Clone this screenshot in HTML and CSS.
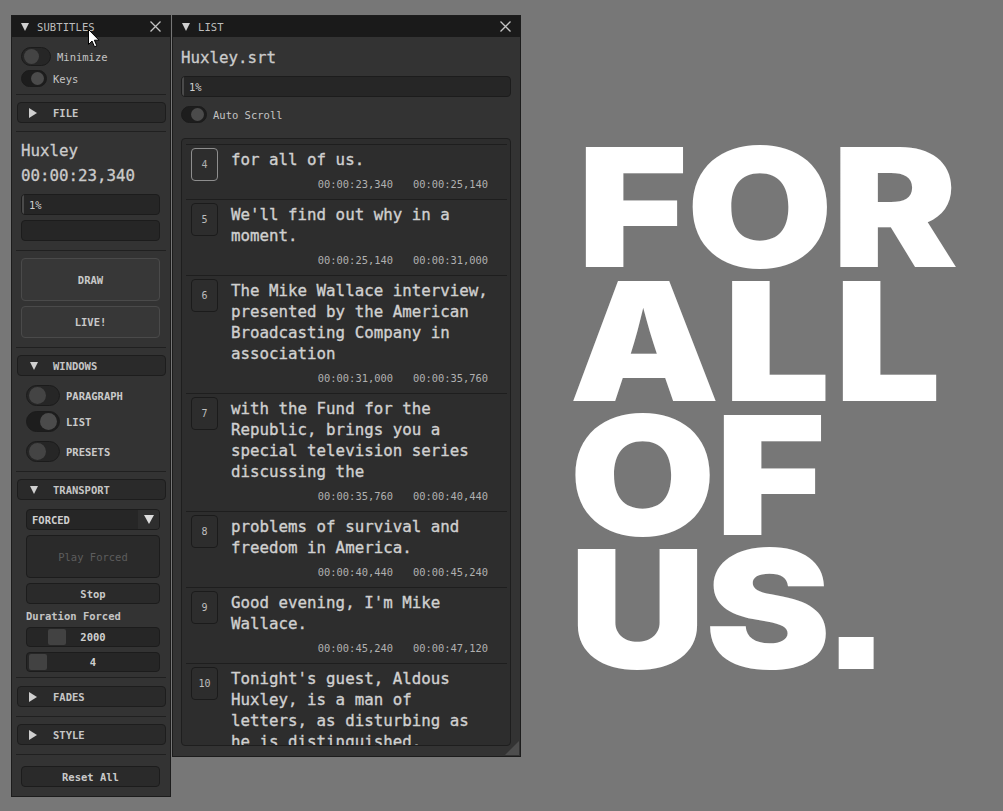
FILE: index.html
```html
<!DOCTYPE html>
<html>
<head>
<meta charset="utf-8">
<link rel="stylesheet" href="styles.css">
</head>
<body>
<div class="desk">

  <section class="win win-sub">
    <header class="titlebar">
      <i class="tri-down"></i><span class="ttl">SUBTITLES</span>
      <svg class="close" viewBox="0 0 11 11"><path d="M0.5 0.5 L10.5 10.5 M10.5 0.5 L0.5 10.5"/></svg>
    </header>
    <div class="sub-body">
      <div class="row-tog in1"><span class="tog tog-md"><i></i></span><span class="lbl">Minimize</span></div>
      <div class="row-tog in1 gap-4"><span class="tog tog-sm on"><i></i></span><span class="lbl lbl-keys">Keys</span></div>
      <div class="sep gap-7"></div>
      <div class="hdr gap-7"><i class="tri-right"></i><span>FILE</span></div>
      <div class="sep gap-8"></div>
      <div class="big gap-9">Huxley</div>
      <div class="big">00:00:23,340</div>
      <div class="bar in1 gap-8"><i class="fill"></i><span>1%</span></div>
      <div class="bar in1"></div>
      <div class="sep gap-9"></div>
      <div class="btn btn-lit in1 h43 gap-7">DRAW</div>
      <div class="btn btn-lit in1 h32">LIVE!</div>
      <div class="sep gap-9"></div>
      <div class="hdr gap-7"><i class="tri-down tri-hdr"></i><span>WINDOWS</span></div>
      <div class="row-tog in2 gap-9"><span class="tog tog-lg"><i></i></span><span class="lbl strong">PARAGRAPH</span></div>
      <div class="row-tog in2"><span class="tog tog-lg on"><i></i></span><span class="lbl strong">LIST</span></div>
      <div class="row-tog in2 gap-9"><span class="tog tog-lg"><i></i></span><span class="lbl strong">PRESETS</span></div>
      <div class="sep gap-9"></div>
      <div class="hdr gap-7"><i class="tri-down tri-hdr"></i><span>TRANSPORT</span></div>
      <div class="select in2 gap-9"><span class="sel-val">FORCED</span><span class="sel-arrow"><i class="tri-down tri-sel"></i></span></div>
      <div class="btn btn-dark in2 h43 disabled">Play Forced</div>
      <div class="btn btn-dark in2 h21">Stop</div>
      <div class="caption in2">Duration Forced</div>
      <div class="slider in2 gap-4"><i class="grab grab-2000"></i><span>2000</span></div>
      <div class="slider in2"><i class="grab grab-4"></i><span>4</span></div>
      <div class="sep"></div>
      <div class="hdr gap-8"><i class="tri-right"></i><span>FADES</span></div>
      <div class="sep gap-9"></div>
      <div class="hdr gap-7"><i class="tri-right"></i><span>STYLE</span></div>
      <div class="sep gap-9"></div>
      <div class="btn btn-dark in1 h21 gap-11">Reset All</div>
    </div>
  </section>

  <section class="win win-list">
    <header class="titlebar">
      <i class="tri-down"></i><span class="ttl ttl-list">LIST</span>
      <svg class="close" viewBox="0 0 11 11"><path d="M0.5 0.5 L10.5 10.5 M10.5 0.5 L0.5 10.5"/></svg>
    </header>
    <div class="list-body">
      <div class="big file">Huxley.srt</div>
      <div class="bar bar-list"><i class="fill"></i><span>1%</span></div>
      <div class="row-tog auto"><span class="tog tog-sm on"><i></i></span><span class="lbl">Auto Scroll</span></div>
      <div class="child">
        <div class="item-sep"></div>
        <div class="item">
          <div class="num sel">4</div>
          <div class="txt">for all of us.</div>
          <div class="times"><span>00:00:23,340</span><span>00:00:25,140</span></div>
        </div>
        <div class="item-sep"></div>
        <div class="item">
          <div class="num">5</div>
          <div class="txt">We'll find out why in a moment.</div>
          <div class="times"><span>00:00:25,140</span><span>00:00:31,000</span></div>
        </div>
        <div class="item-sep"></div>
        <div class="item">
          <div class="num">6</div>
          <div class="txt">The Mike Wallace interview, presented by the American Broadcasting Company in association</div>
          <div class="times"><span>00:00:31,000</span><span>00:00:35,760</span></div>
        </div>
        <div class="item-sep"></div>
        <div class="item">
          <div class="num">7</div>
          <div class="txt">with the Fund for the Republic, brings you a special television series discussing the</div>
          <div class="times"><span>00:00:35,760</span><span>00:00:40,440</span></div>
        </div>
        <div class="item-sep"></div>
        <div class="item">
          <div class="num">8</div>
          <div class="txt">problems of survival and freedom in America.</div>
          <div class="times"><span>00:00:40,440</span><span>00:00:45,240</span></div>
        </div>
        <div class="item-sep"></div>
        <div class="item">
          <div class="num">9</div>
          <div class="txt">Good evening, I'm Mike Wallace.</div>
          <div class="times"><span>00:00:45,240</span><span>00:00:47,120</span></div>
        </div>
        <div class="item-sep"></div>
        <div class="item">
          <div class="num">10</div>
          <div class="txt">Tonight's guest, Aldous Huxley, is a man of letters, as disturbing as he is distinguished.</div>
          <div class="times"><span>00:00:47,120</span><span>00:00:51,800</span></div>
        </div>
      </div>
    </div>
    <i class="grip"></i>
  </section>

  <div class="poster">
    <div class="pl pl-for">FOR</div>
    <div class="pl pl-all">ALL</div>
    <div class="pl">OF</div>
    <div class="pl">US<span class="dot">.</span></div>
  </div>

  <svg class="cursor" viewBox="0 0 12 19" width="12" height="19">
    <path d="M0.5 0.5 L0.5 15.5 L4 12 L6.5 17.8 L8.8 16.8 L6.4 11.2 L11 11.2 Z"/>
  </svg>
</div>
</body>
</html>
```

FILE: styles.css
```css
* { box-sizing: border-box; }

html, body {
  margin: 0;
  padding: 0;
}

body {
  background: #777777;
  width: 1003px;
  height: 811px;
  overflow: hidden;
  font-family: "DejaVu Sans Mono", "Liberation Mono", monospace;
  color: #c8c8c8;
}

.desk {
  position: relative;
  width: 1003px;
  height: 811px;
}

/* ---------- windows ---------- */
.win {
  position: absolute;
  display: flex;
  flex-direction: column;
  background: #333333;
  border: 1px solid #1c1c1c;
}

.win-sub {
  left: 11px;
  top: 15px;
  width: 160px;
  height: 782px;
}

.win-list {
  left: 172px;
  top: 15px;
  width: 349px;
  height: 742px;
}

.titlebar {
  height: 21px;
  flex: none;
  display: flex;
  align-items: center;
  background: #1a1a1a;
  padding-left: 9px;
  padding-right: 9px;
}

.ttl {
  font-size: 10.5px;
  color: #bdbdbd;
  margin-left: 8px;
  letter-spacing: 0.1px;
}

.close {
  margin-left: auto;
  width: 11px;
  height: 11px;
  fill: none;
  stroke: #c4c4c4;
  stroke-width: 1.3;
}

.tri-down {
  width: 0;
  height: 0;
  border-left: 4.5px solid transparent;
  border-right: 4.5px solid transparent;
  border-top: 8px solid #d0d0d0;
  flex: none;
}

.tri-right {
  width: 0;
  height: 0;
  border-top: 5px solid transparent;
  border-bottom: 5px solid transparent;
  border-left: 8px solid #cfcfcf;
  flex: none;
}

/* ---------- subtitles body ---------- */
.sub-body {
  display: flex;
  flex-direction: column;
  padding: 10px 4px 0 5px;
}

.sub-body > * + * { margin-top: 5px; }
.sub-body > .gap-4 { margin-top: 4px; }
.sub-body > .gap-7 { margin-top: 7px; }
.sub-body > .gap-8 { margin-top: 8px; }
.sub-body > .gap-9 { margin-top: 9px; }
.sub-body > .gap-11 { margin-top: 11px; }

.in1 { margin-left: 4px; margin-right: 6px; }
.in2 { margin-left: 9px; margin-right: 6px; }

.sep {
  height: 1px;
  background: #202020;
  margin-left: -1px;
}

.hdr {
  height: 21px;
  display: flex;
  align-items: center;
  background: #2a2a2a;
  border: 1px solid #1d1d1d;
  border-radius: 4px;
  padding-left: 11px;
  font-size: 10.5px;
  font-weight: bold;
  color: #c6c6c6;
}

.hdr span { margin-left: 16px; }
.hdr .tri-hdr { margin-left: 1px; }
.hdr .tri-hdr + span { margin-left: 15px; }

.row-tog {
  display: flex;
  align-items: center;
}

.lbl {
  font-size: 10.5px;
  color: #c4c4c4;
  margin-left: 6px;
}

.lbl.strong {
  font-weight: bold;
  color: #cacaca;
}

.tog {
  display: flex;
  align-items: center;
  flex: none;
  border-radius: 999px;
  background: #262626;
  border: 1px solid #1b1b1b;
  padding: 0 2px;
}

.tog i {
  display: block;
  border-radius: 50%;
  background: #444444;
}

.tog.on {
  justify-content: flex-end;
  background: #1d1d1d;
}

.tog.on i { background: #4b4b4b; }

.tog-md { width: 30px; height: 19px; }
.tog-md i { width: 15px; height: 15px; }
.tog-sm { width: 26px; height: 17px; }
.tog-sm i { width: 13px; height: 13px; }
.tog-lg { width: 34px; height: 21px; }
.tog-lg i { width: 17px; height: 17px; }

.big {
  font-size: 15.8px;
  line-height: 20px;
  color: #cbcbcb;
  padding-left: 4px;
  -webkit-text-stroke: 0.3px #cbcbcb;
}

.bar {
  height: 21px;
  display: flex;
  align-items: center;
  background: #262626;
  border: 1px solid #1c1c1c;
  border-radius: 4px;
  font-size: 10.5px;
  color: #cfcfcf;
  overflow: hidden;
}

.bar .fill {
  align-self: stretch;
  width: 2px;
  background: #4a4a4a;
  flex: none;
}

.bar span { margin-left: 5px; }

.btn {
  display: flex;
  align-items: center;
  justify-content: center;
  border-radius: 4px;
  font-size: 10.5px;
  font-weight: bold;
  color: #c9c9c9;
}

.btn-lit {
  background: #373737;
  border: 1px solid #4a4a4a;
}

.btn-dark {
  background: #2a2a2a;
  border: 1px solid #1c1c1c;
}

.btn.disabled {
  color: #5d5d5d;
  font-weight: normal;
}

.h43 { height: 43px; }
.h32 { height: 32px; }
.h21 { height: 21px; }

.select {
  height: 21px;
  display: flex;
  background: #262626;
  border: 1px solid #1c1c1c;
  border-radius: 4px;
  overflow: hidden;
  font-size: 10.5px;
  font-weight: bold;
  color: #cfcfcf;
}

.sel-val {
  flex: 1;
  display: flex;
  align-items: center;
  padding-left: 5px;
}

.sel-arrow {
  width: 21px;
  display: flex;
  align-items: center;
  justify-content: center;
  background: #2e2e2e;
}

.tri-sel {
  border-left-width: 5px;
  border-right-width: 5px;
  border-top-width: 9px;
  border-top-color: #dcdcdc;
}

.caption {
  font-size: 10.5px;
  line-height: 14px;
  color: #c4c4c4;
  font-weight: bold;
}

.slider {
  height: 20px;
  display: flex;
  align-items: center;
  justify-content: center;
  position: relative;
  background: #262626;
  border: 1px solid #1c1c1c;
  border-radius: 4px;
  font-size: 10.5px;
  color: #cfcfcf;
  font-weight: bold;
}

.grab {
  position: absolute;
  top: 1px;
  width: 18px;
  height: 16px;
  background: #424242;
  border-radius: 2px;
}

.grab-2000 { left: 21px; }
.grab-4 { left: 2px; }

/* ---------- list window ---------- */
.list-body {
  display: flex;
  flex-direction: column;
  padding: 0 9px 0 8px;
  flex: 1;
  min-height: 0;
}

.file {
  padding-left: 0;
  margin-top: 11px;
}

.bar-list { margin-top: 8px; }

.auto { margin-top: 9px; }

.child {
  margin-top: 15px;
  height: 608px;
  background: #2d2d2d;
  border: 1px solid #1e1e1e;
  border-radius: 4px;
  overflow: hidden;
  padding-top: 5px;
}

.item-sep {
  height: 1px;
  background: #1e1e1e;
  margin: 0 3px 0 4px;
}

.item {
  display: grid;
  grid-template-columns: 27px 1fr;
  column-gap: 13px;
  padding: 3px 0 8px 9px;
}

.num {
  grid-row: 1 / span 2;
  width: 27px;
  height: 33px;
  border: 1px solid #1b1b1b;
  border-radius: 4px;
  display: flex;
  align-items: center;
  justify-content: center;
  font-size: 10px;
  color: #bdbdbd;
}

.num.sel {
  border-color: #8e8e8e;
  color: #b0b0b0;
}

.txt {
  padding-top: 1px;
  padding-right: 18px;
  font-size: 15.8px;
  line-height: 21px;
  color: #d0d0d0;
  -webkit-text-stroke: 0.35px #d0d0d0;
}

.times {
  grid-column: 2;
  display: flex;
  justify-content: flex-end;
  gap: 20px;
  margin-top: 7px;
  padding-right: 22px;
  font-size: 10.4px;
  line-height: 14px;
  color: #b0b0b0;
}

.grip {
  position: absolute;
  right: 1px;
  bottom: 1px;
  width: 0;
  height: 0;
  border-left: 14px solid transparent;
  border-bottom: 14px solid #4e4e4e;
}

/* ---------- poster ---------- */
.poster {
  position: absolute;
  left: 569px;
  top: 140px;
  font-family: Inter, "Liberation Sans", sans-serif;
  font-weight: 900;
  font-size: 165px;
  line-height: 134px;
  color: #ffffff;
  letter-spacing: -1px;
  transform: scaleX(1.15);
  transform-origin: 0 0;
}

.pl { white-space: nowrap; }
.pl-for { padding-left: 7px; letter-spacing: -1.5px; }
.pl-all { letter-spacing: 3px; }

.dot {
  font-family: "Liberation Sans", sans-serif;
  font-weight: 700;
  font-size: 1.3em;
  line-height: 0;
  letter-spacing: 0;
  margin-left: -7px;
}

.cursor {
  position: absolute;
  left: 88px;
  top: 29px;
  fill: #ffffff;
  stroke: #000000;
  stroke-width: 1;
  stroke-linejoin: round;
}
```
